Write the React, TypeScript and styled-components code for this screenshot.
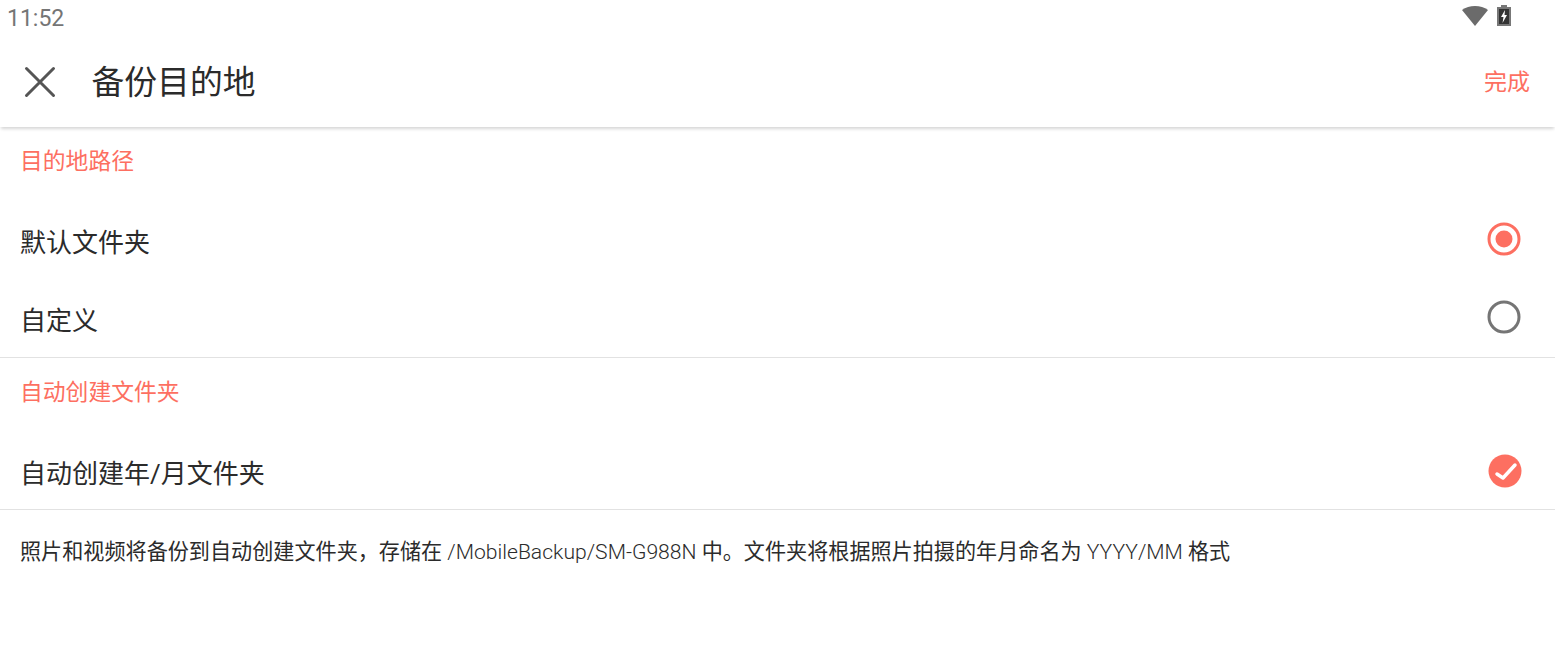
import React from 'react'
import styled, { createGlobalStyle } from 'styled-components'

const CORAL = '#fd6f61'
const FONT = '"Roboto", "Noto Sans CJK SC", sans-serif'

const GlobalStyle = createGlobalStyle`
  html, body {
    margin: 0;
    padding: 0;
    background: #fff;
    font-family: ${FONT};
  }
`

const Page = styled.div`
  width: 1555px;
  height: 663px;
  overflow: hidden;
  background: #fff;
  display: flex;
  flex-direction: column;
`

const StatusBar = styled.div`
  height: 36px;
  flex: none;
  display: flex;
  align-items: center;
  justify-content: space-between;
  padding: 0 44px 0 7px;
  color: #757575;
  font-size: 23px;
`

const StatusIcons = styled.div`
  display: flex;
  align-items: center;
  gap: 9px;
  margin-top: -5px;
`

const AppBar = styled.div`
  height: 91px;
  flex: none;
  display: flex;
  align-items: center;
  padding: 0 25px 0 22px;
  box-shadow: 0 3px 3px -1px rgba(0, 0, 0, 0.16);
  position: relative;
`

const Title = styled.div`
  flex: 1;
  margin: 0 0 4px 33.500px;
  font-size: 32.800px;
  color: #2b2b2b;
`

const Done = styled.div`
  color: ${CORAL};
  font-size: 23px;
  margin-bottom: 4px;
`

const SectionTitle = styled.div`
  height: 68px;
  padding: 19px 20px 0;
  box-sizing: border-box;
  color: ${CORAL};
  font-size: 22.800px;
  line-height: 32px;
`

const Row = styled.div<{ $height: number; $shift: number }>`
  height: ${p => p.$height}px;
  box-sizing: border-box;
  padding: ${p => p.$shift * 2}px 34px 0 20px;
  display: flex;
  align-items: center;
  justify-content: space-between;
  font-size: 26px;
  color: #2b2b2b;
`

const RowLabel = styled.span`
  margin-top: 2px;
`

const Divider = styled.div`
  height: 1px;
  background: #e2e2e2;
`

const Note = styled.div`
  padding: 27px 20px 0;
  font-size: 21.120px;
  line-height: 30px;
  color: #2b2b2b;
`

const LatinRun = styled.span`
  font-weight: 300;
`

const CheckSvg = styled.svg`
  margin-right: -1px;
`

const CloseIcon = () => (
  <svg width="36" height="36" viewBox="0 0 36 36" fill="none" stroke="#555" strokeWidth="3" strokeLinecap="round">
    <path d="M4.500 4.500 L31.500 31.500 M31.500 4.500 L4.500 31.500" />
  </svg>
)

const WifiIcon = () => (
  <svg width="26" height="20" viewBox="0 0 26 20">
    <path d="M13 20 L0 4 C7 -1.300 19 -1.300 26 4 Z" fill="#6b6b6b" />
  </svg>
)

const BatteryIcon = () => (
  <svg width="14" height="21" viewBox="0 0 14 21">
    <path d="M4 0 H10 V2 H14 V21 H0 V2 H4 Z" fill="#777" />
    <rect x="2" y="4" width="10" height="15" fill="#333" />
    <path d="M8 5 L4 12 H6.500 L5.500 18 L10 10 H7.500 Z" fill="#fff" />
  </svg>
)

const RadioOn = () => (
  <svg width="34" height="34" viewBox="0 0 34 34">
    <circle cx="17" cy="17" r="15" fill="none" stroke={CORAL} strokeWidth="3" />
    <circle cx="17" cy="17" r="8.500" fill={CORAL} />
  </svg>
)

const RadioOff = () => (
  <svg width="34" height="34" viewBox="0 0 34 34">
    <circle cx="17" cy="17" r="15" fill="none" stroke="#757575" strokeWidth="3" />
  </svg>
)

const CheckOn = () => (
  <CheckSvg width="34" height="34" viewBox="0 0 34 34">
    <circle cx="17" cy="17" r="16.500" fill={CORAL} />
    <path d="M9 20 L15 24 L27 11" fill="none" stroke="#fff" strokeWidth="3.500" strokeLinecap="round" strokeLinejoin="round" />
  </CheckSvg>
)

export default function App() {
  return (
    <Page>
      <GlobalStyle />
      <StatusBar>
        <span>11:52</span>
        <StatusIcons>
          <WifiIcon />
          <BatteryIcon />
        </StatusIcons>
      </StatusBar>
      <AppBar>
        <CloseIcon />
        <Title>备份目的地</Title>
        <Done>完成</Done>
      </AppBar>
      <SectionTitle>目的地路径</SectionTitle>
      <Row $height={80} $shift={4}>
        <RowLabel>默认文件夹</RowLabel>
        <RadioOn />
      </Row>
      <Row $height={82} $shift={1}>
        <RowLabel>自定义</RowLabel>
        <RadioOff />
      </Row>
      <Divider />
      <SectionTitle>自动创建文件夹</SectionTitle>
      <Row $height={83} $shift={3}>
        <RowLabel>自动创建年/月文件夹</RowLabel>
        <CheckOn />
      </Row>
      <Divider />
      <Note>
        照片和视频将备份到自动创建文件夹，存储在<LatinRun> /MobileBackup/SM-G988N </LatinRun>中。文件夹将根据照片拍摄的年月命名为<LatinRun> YYYY/MM </LatinRun>格式
      </Note>
    </Page>
  )
}
